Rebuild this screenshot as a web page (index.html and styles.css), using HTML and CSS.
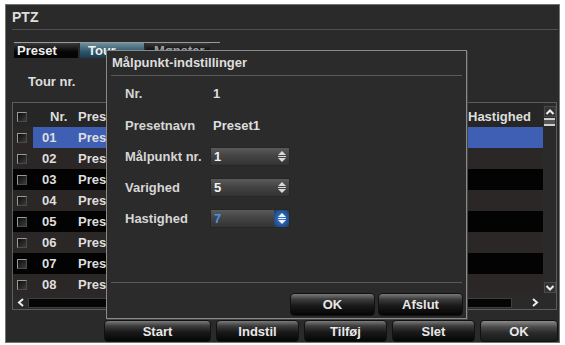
FILE: index.html
```html
<!DOCTYPE html>
<html>
<head>
    <meta charset="utf-8">
    <title>PTZ</title>
    <link rel="stylesheet" href="styles.css">
</head>
<body>
    <div class="window">
        <div class="window-title">PTZ</div>
        <div class="title-line"></div>

        <div class="tabs">
            <div class="tab">Preset</div>
            <div class="tab active">Tour</div>
            <div class="tab hidden">Mønster</div>
        </div>

        <div class="tour-row">Tour nr.</div>

        <div class="list">
            <div class="list-body">
                <div class="row head">
                    <div class="cell check"><span class="box"></span></div>
                    <div class="cell nr">Nr.</div>
                    <div class="cell name">Preset</div>
                    <div class="cell speed">Hastighed</div>
                </div>
                <div class="row selected">
                    <div class="cell check"><span class="box"></span></div>
                    <div class="cell nr">01</div>
                    <div class="cell name">Preset1</div>
                    <div class="cell speed"></div>
                </div>
                <div class="row">
                    <div class="cell check"><span class="box"></span></div>
                    <div class="cell nr">02</div>
                    <div class="cell name">Preset2</div>
                    <div class="cell speed"></div>
                </div>
                <div class="row dark">
                    <div class="cell check"><span class="box"></span></div>
                    <div class="cell nr">03</div>
                    <div class="cell name">Preset3</div>
                    <div class="cell speed"></div>
                </div>
                <div class="row">
                    <div class="cell check"><span class="box"></span></div>
                    <div class="cell nr">04</div>
                    <div class="cell name">Preset4</div>
                    <div class="cell speed"></div>
                </div>
                <div class="row dark">
                    <div class="cell check"><span class="box"></span></div>
                    <div class="cell nr">05</div>
                    <div class="cell name">Preset5</div>
                    <div class="cell speed"></div>
                </div>
                <div class="row">
                    <div class="cell check"><span class="box"></span></div>
                    <div class="cell nr">06</div>
                    <div class="cell name">Preset6</div>
                    <div class="cell speed"></div>
                </div>
                <div class="row dark">
                    <div class="cell check"><span class="box"></span></div>
                    <div class="cell nr">07</div>
                    <div class="cell name">Preset7</div>
                    <div class="cell speed"></div>
                </div>
                <div class="row">
                    <div class="cell check"><span class="box"></span></div>
                    <div class="cell nr">08</div>
                    <div class="cell name">Preset8</div>
                    <div class="cell speed"></div>
                </div>
                <!-- horizontal scrollbar -->
                <div class="hscroll">
                    <svg class="chev" width="8" height="9" viewBox="0 0 8 9"><path d="M6 1 L2 4.5 L6 8" fill="none" stroke="#eee" stroke-width="2"/></svg>
                    <div class="htrack"></div>
                    <svg class="chev" width="8" height="9" viewBox="0 0 8 9"><path d="M2 1 L6 4.5 L2 8" fill="none" stroke="#eee" stroke-width="2"/></svg>
                </div>
            </div>
            <!-- vertical scrollbar -->
            <div class="vscroll">
                <div class="vbtn">
                    <svg width="10" height="8" viewBox="0 0 10 8"><path d="M1.5 6 L5 2.5 L8.5 6" fill="none" stroke="#eee" stroke-width="2"/></svg>
                </div>
                <div class="vthumb"></div>
                <div class="vbtn down">
                    <svg width="10" height="8" viewBox="0 0 10 8"><path d="M1.5 2 L5 5.5 L8.5 2" fill="none" stroke="#eee" stroke-width="2"/></svg>
                </div>
            </div>
        </div>

        <div class="bottom-buttons">
            <div class="btn start">Start</div>
            <div class="btn">Indstil</div>
            <div class="btn">Tilføj</div>
            <div class="btn">Slet</div>
            <div class="btn ok">OK</div>
        </div>

        <!-- Dialog over the list -->
        <div class="dialog">
            <div class="dialog-title">Målpunkt-indstillinger</div>
            <div class="dialog-line"></div>
            <div class="field first">
                <span class="label">Nr.</span>
                <span class="value">1</span>
            </div>
            <div class="field">
                <span class="label">Presetnavn</span>
                <span class="value">Preset1</span>
            </div>
            <div class="field spin-field">
                <span class="label">Målpunkt nr.</span>
                <div class="spin">
                    <span class="spin-value">1</span>
                    <span class="spin-arrows">
                        <svg width="12" height="15" viewBox="0 0 12 15"><path d="M2 6 L6 2 L10 6 Z M2 9 L6 13 L10 9 Z" fill="#d8d8d8"/><rect x="2" y="7" width="8" height="1" fill="#d8d8d8"/></svg>
                    </span>
                </div>
            </div>
            <div class="field spin-field">
                <span class="label">Varighed</span>
                <div class="spin">
                    <span class="spin-value">5</span>
                    <span class="spin-arrows">
                        <svg width="12" height="15" viewBox="0 0 12 15"><path d="M2 6 L6 2 L10 6 Z M2 9 L6 13 L10 9 Z" fill="#d8d8d8"/><rect x="2" y="7" width="8" height="1" fill="#d8d8d8"/></svg>
                    </span>
                </div>
            </div>
            <div class="field spin-field">
                <span class="label">Hastighed</span>
                <div class="spin active">
                    <span class="spin-value">7</span>
                    <span class="spin-arrows">
                        <svg width="12" height="15" viewBox="0 0 12 15"><path d="M2 6 L6 2 L10 6 Z M2 9 L6 13 L10 9 Z" fill="#eef4ff"/><rect x="2" y="7" width="8" height="1" fill="#eef4ff"/></svg>
                    </span>
                </div>
            </div>
            <div class="dialog-line bottom"></div>
            <div class="dialog-buttons">
                <div class="btn">OK</div>
                <div class="btn">Afslut</div>
            </div>
        </div><!-- .dialog -->
    </div><!-- .window -->
</body>
</html>
```

FILE: styles.css
```css
* {
    margin: 0;
    padding: 0;
    box-sizing: border-box;
}

body {
    background: #ffffff;
    font-family: "Liberation Sans", Arial, sans-serif;
    font-size: 13px;
    font-weight: bold;
    color: #dedede;
    overflow: hidden;
}

.window {
    position: relative;
    margin: 4px 0 0 5px;
    width: 555px;
    height: 339px;
    display: flex;
    flex-direction: column;
    padding: 0 1px 0 6px;
    background: #2a2a2a;
    border: 1px solid #6f786f;
}

.window-title {
    height: 24px;
    line-height: 24px;
    font-size: 14px;
}

.title-line {
    height: 1px;
    background: #505050;
}

/* Tabs */
.tabs {
    display: flex;
    gap: 2px;
    margin: 12px 0 0 2px;
    height: 16px;
    width: 206px;
    border-top: 1px solid #9a9a9a;
}

.tab {
    width: 64px;
    line-height: 15px;
    padding-left: 3px;
    background: linear-gradient(#3a3a3a, #050505 60%);
    color: #f0f0f0;
}

.tab.active {
    padding-left: 8px;
    background: linear-gradient(#6f8f9f, #2c5368 60%, #1d3b4c);
}

.tab.hidden {
    padding-left: 8px;
    color: #9aa0a6;
}

.tour-row {
    margin-top: 16px;
    height: 16px;
    line-height: 16px;
    padding-left: 16px;
}

/* List */
.list {
    margin-top: 12px;
    margin-right: 1px;
    height: 208px;
    display: flex;
    border: 1px solid #5c5c5c;
}

.list-body {
    width: 530px;
    display: flex;
    flex-direction: column;
}

.row {
    display: grid;
    grid-template-columns: 20px 43px 1fr 77px;
    height: 21px;
    line-height: 21px;
}

.row.head {
    height: 24px;
    line-height: 20px;
    padding-top: 4px;
    background: #262626;
}

.cell {
    overflow: hidden;
    white-space: nowrap;
}

.cell.check {
    display: flex;
    align-items: center;
    padding-left: 4px;
}

.cell.nr {
    padding-left: 9px;
}

.head .cell.nr {
    padding-left: 17px;
}

.cell.name {
    padding-left: 2px;
}

.cell.speed {
    padding-left: 2px;
}

.row .cell { background: #2b2727; }
.row.head .cell { background: transparent; }
.row.dark .cell { background: #030303; }
.row.selected .cell { background: #3f5fb4; }
.row.selected .cell.check { background: #2b2727; }

.box {
    width: 10px;
    height: 10px;
    border: 1px solid;
    border-color: #9a9a9a #4a4a4a #4a4a4a #9a9a9a;
    background: linear-gradient(135deg, #0c0c0c, #3c3c3c);
}

.hscroll {
    margin-top: 1px;
    height: 13px;
    display: flex;
    align-items: center;
    gap: 3px;
    padding: 0 4px 0 4px;
}

.htrack {
    height: 10px;
    width: 484px;
    background: #050505;
    border: 1px solid #3e3e3e;
    margin-right: 16px;
}

.vscroll {
    flex: 1;
    display: flex;
    flex-direction: column;
    align-items: center;
    padding-top: 3px;
}

.vbtn {
    width: 12px;
    height: 11px;
    display: flex;
    align-items: center;
    justify-content: center;
    border: 1px solid #4a4a4a;
    background: #333;
}

.vbtn.down {
    margin-top: auto;
    margin-bottom: 16px;
}

.vthumb {
    width: 11px;
    height: 8px;
    margin-top: 1px;
    border-top: 2px solid #cfcfcf;
    border-bottom: 2px solid #cfcfcf;
    background: #555;
}

/* Buttons */
.btn {
    height: 23px;
    width: 84px;
    line-height: 22px;
    text-align: center;
    color: #e8e8e8;
    border: 1px solid #111;
    border-radius: 4px;
    background: linear-gradient(#7a7a7a, #3c3c3c 25%, #1a1a1a 55%, #050505);
}

.bottom-buttons {
    margin-top: 10px;
    height: 22px;
    display: flex;
    justify-content: flex-end;
    gap: 5px;
}

.bottom-buttons .btn {
    height: 22px;
    width: 83px;
}

.bottom-buttons .btn.start { width: 107px; }
.bottom-buttons .btn.ok {
    width: 78px;
    background: linear-gradient(#8a8a8a, #4a4a4a 30%, #2a2a2a 60%, #1a1a1a);
}

/* Dialog */
.dialog {
    position: absolute;
    left: 100px;
    top: 45px;
    width: 361px;
    height: 269px;
    display: flex;
    flex-direction: column;
    padding-bottom: 2px;
    background: #2b2b2b;
    border: 1px solid #8a8a8a;
    box-shadow: 1px 1px 0 #444;
}

.dialog-title {
    height: 24px;
    line-height: 24px;
    padding-left: 5px;
}

.dialog-line {
    height: 1px;
    margin: 0 4px;
    background: #5a5a5a;
}

.dialog-line.bottom {
    margin-top: auto;
}

.field {
    display: flex;
    align-items: center;
    height: 32px;
    padding-left: 18px;
}

.field.first {
    margin-top: 1px;
}

.field.spin-field {
    height: 31px;
}

.label {
    width: 85px;
    color: #d6d6d6;
}

.value {
    padding-left: 3px;
}

.spin {
    width: 80px;
    height: 19px;
    display: flex;
    align-items: center;
    border: 1px solid #262626;
    background: linear-gradient(#5a5a5a, #444 45%, #333);
}

.spin-value {
    flex: 1;
    padding-left: 3px;
    color: #f2f2f2;
}

.spin-arrows {
    width: 15px;
    height: 17px;
    display: flex;
    align-items: center;
    justify-content: center;
}

.spin.active .spin-value {
    color: #4a90e8;
}

.spin.active .spin-arrows {
    background: radial-gradient(#3f7fd0, #1f4f90 70%, #333);
}

.dialog-buttons {
    margin-top: 10px;
    display: flex;
    justify-content: flex-end;
    gap: 3px;
    padding-right: 3px;
}

.dialog-buttons .btn {
    width: 85px;
}
```
